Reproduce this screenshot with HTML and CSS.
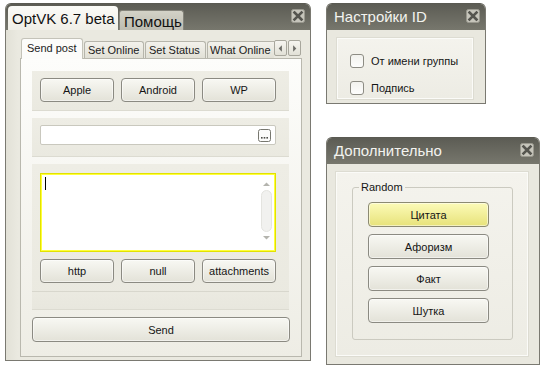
FILE: index.html
```html
<!DOCTYPE html>
<html>
<head>
<meta charset="utf-8">
<link rel="stylesheet" href="styles.css">
</head>
<body>
<div class="win main">
  <div class="titlebar">
    <div class="ttab on">OptVK 6.7 beta</div>
    <div class="ttab off">Помощь</div>
    <span class="close"><svg width="14" height="14" viewBox="0 0 14 14"><rect x="0.5" y="0.5" width="13" height="13" rx="2" fill="#c6c5bb" stroke="#9a998f"/><path d="M3.5 3.5 L10.5 10.5 M10.5 3.5 L3.5 10.5" stroke="#55554f" stroke-width="2.6" stroke-linecap="square"/></svg></span>
  </div>
  <div class="wbody">
    <div class="tabs">
      <div class="tablist">
        <div class="tab on w1">Send post</div>
        <div class="tab w2">Set Online</div>
        <div class="tab w3">Set Status</div>
        <div class="tab w4">What Online</div>
      </div>
      <div class="arrows">
        <span class="arr"><svg width="12" height="15" viewBox="0 0 12 15"><path d="M7.5 4 L4 7.5 L7.5 11 Z" fill="#6d6d68"/></svg></span>
        <span class="arr"><svg width="12" height="15" viewBox="0 0 12 15"><path d="M4.5 4 L8 7.5 L4.5 11 Z" fill="#6d6d68"/></svg></span>
      </div>
    </div>
    <div class="pane">
      <div class="group g1">
        <button class="btn">Apple</button>
        <button class="btn">Android</button>
        <button class="btn">WP</button>
      </div>
      <div class="group g2">
        <div class="input">
          <span class="dots"><svg width="13" height="13" viewBox="0 0 13 13"><rect x="0.5" y="0.5" width="12" height="12" rx="2" fill="#fbfbfa" stroke="#77776f"/><rect x="3" y="8" width="1.6" height="1.6" fill="#4d4d48"/><rect x="5.7" y="8" width="1.6" height="1.6" fill="#4d4d48"/><rect x="8.4" y="8" width="1.6" height="1.6" fill="#4d4d48"/></svg></span>
        </div>
      </div>
      <div class="group g3">
        <div class="textarea">
          <span class="caret"></span>
          <div class="vscroll">
            <svg width="15" height="8" viewBox="0 0 15 8"><path d="M4 6 L7.5 2.5 L11 6 Z" fill="#b4b4ae"/></svg>
            <span class="thumb"></span>
            <svg width="15" height="8" viewBox="0 0 15 8"><path d="M4 2 L7.5 5.5 L11 2 Z" fill="#b4b4ae"/></svg>
          </div>
        </div>
        <div class="row">
          <button class="btn">http</button>
          <button class="btn">null</button>
          <button class="btn">attachments</button>
        </div>
        <div class="sep"></div>
      </div>
      <button class="btn send">Send</button>
    </div>
  </div>
</div>

<div class="win sett">
  <div class="titlebar">
    <span class="wtitle">Настройки ID</span>
    <span class="close"><svg width="14" height="14" viewBox="0 0 14 14"><rect x="0.5" y="0.5" width="13" height="13" rx="2" fill="#c6c5bb" stroke="#9a998f"/><path d="M3.5 3.5 L10.5 10.5 M10.5 3.5 L3.5 10.5" stroke="#55554f" stroke-width="2.6" stroke-linecap="square"/></svg></span>
  </div>
  <div class="wbody2 sb">
    <div class="panel checks">
      <label class="chk"><span class="box"></span>От имени группы</label>
      <label class="chk"><span class="box"></span>Подпись</label>
    </div>
  </div>
</div>

<div class="win extra">
  <div class="titlebar">
    <span class="wtitle">Дополнительно</span>
    <span class="close"><svg width="14" height="14" viewBox="0 0 14 14"><rect x="0.5" y="0.5" width="13" height="13" rx="2" fill="#c6c5bb" stroke="#9a998f"/><path d="M3.5 3.5 L10.5 10.5 M10.5 3.5 L3.5 10.5" stroke="#55554f" stroke-width="2.6" stroke-linecap="square"/></svg></span>
  </div>
  <div class="wbody2 eb">
    <div class="panel rnd">
      <fieldset class="fs">
        <legend>Random</legend>
        <button class="btn rb yellow">Цитата</button>
        <button class="btn rb">Афоризм</button>
        <button class="btn rb">Факт</button>
        <button class="btn rb">Шутка</button>
      </fieldset>
    </div>
  </div>
</div>
</body>
</html>
```
FILE: styles.css
```css
html, body {
  margin: 0;
  padding: 0;
}
body {
  width: 542px;
  height: 368px;
  background: #ffffff;
  position: relative;
  overflow: hidden;
  font-family: "Liberation Sans", Arial, sans-serif;
  font-size: 11px;
  color: #1b1b1b;
}
.win {
  position: absolute;
  box-sizing: border-box;
  display: flex;
  flex-direction: column;
  background: #e9e8df;
  border: 1px solid #7a7971;
  border-top-color: #5a5a52;
  border-radius: 6px 6px 0 0;
}
.main { left: 5px; top: 3px; width: 306px; height: 358px; }
.sett { left: 326px; top: 3px; width: 160px; height: 101px; }
.extra { left: 326px; top: 137px; width: 214px; height: 228px; }

.titlebar {
  flex: none;
  height: 26px;
  position: relative;
  display: flex;
  align-items: flex-end;
  padding-left: 2px;
  background: linear-gradient(#5c5c54, #77776d);
  border-radius: 5px 5px 0 0;
}
.close {
  position: absolute;
  right: 5px;
  top: 5px;
  width: 14px;
  height: 14px;
  display: block;
}
.close svg { display: block; }
.ttab {
  font-size: 15px;
  color: #111;
  box-sizing: border-box;
}
.ttab.on {
  width: 110px;
  height: 24px;
  line-height: 25px;
  padding-left: 4px;
  background: linear-gradient(#fbfbf7, #f0efe7);
  border-radius: 4px 4px 0 0;
}
.ttab.off {
  width: 65px;
  height: 20px;
  line-height: 22px;
  margin-left: 1px;
  padding-left: 4px;
  background: linear-gradient(#d3d2c7, #bdbcb1);
  border: 1px solid #85847b;
  border-bottom: none;
  border-radius: 3px 3px 0 0;
}
.wtitle {
  align-self: center;
  padding-left: 5px;
  font-size: 15px;
  color: #f3f3ef;
  line-height: 26px;
}

.wbody {
  flex: 1;
  display: flex;
  flex-direction: column;
  padding: 8px 8px 3px 14px;
  background: linear-gradient(90deg, #e2e1d7, #eae9e0 12px);
}
.tabs {
  flex: none;
  height: 20px;
  display: flex;
  align-items: flex-end;
  position: relative;
  z-index: 2;
}
.tablist {
  display: flex;
  align-items: flex-end;
  width: 254px;
  overflow: hidden;
  height: 21px;
  margin-bottom: -1px;
}
.tab {
  flex: none;
  box-sizing: border-box;
  height: 17px;
  line-height: 16px;
  margin-bottom: 1px;
  padding-left: 3px;
  white-space: nowrap;
  overflow: hidden;
  color: #1b1b1b;
  background: linear-gradient(#f3f2ec, #e1e0d6);
  border: 1px solid #b6b5ab;
  border-bottom: none;
  border-radius: 3px 3px 0 0;
  margin-left: 1px;
}
.tab.on {
  height: 21px;
  line-height: 18px;
  margin-bottom: 0;
  margin-left: 1px;
  padding-left: 5px;
  background: #fcfcfa;
  border-color: #c4c3b9;
}
.w1 { width: 62px; }
.w2 { width: 60px; }
.w3 { width: 61px; }
.w4 { width: 68px; padding-left: 2px; border-right: none; border-radius: 3px 0 0 0; }
.arrows {
  display: flex;
  gap: 1px;
  margin-left: 0;
  align-self: flex-start;
  margin-top: 2px;
}
.arr {
  width: 13px;
  height: 16px;
  box-sizing: border-box;
  border: 1px solid #a8a79d;
  border-radius: 2px;
  background: linear-gradient(#f6f5f0, #e2e1d7);
  display: flex;
  align-items: center;
  justify-content: center;
}
.arr svg { display: block; }

.pane {
  flex: 1;
  box-sizing: border-box;
  display: flex;
  flex-direction: column;
  gap: 7px;
  padding: 12px 12px 14px 11px;
  border: 1px solid #b9b8ae;
  background: linear-gradient(#fdfdfb, #eeede5);
  position: relative;
  z-index: 1;
}
.group {
  flex: none;
  box-sizing: border-box;
  background: linear-gradient(#eeede5, #eae9e0);
  border-bottom: 1px solid #dcdbd1;
  padding: 0 13px 0 8px;
}
.g1 {
  height: 40px;
  display: flex;
  gap: 7px;
  padding-top: 7px;
}
.g1 .btn, .row .btn { flex: 1; height: 24px; }
.g2 { height: 39px; padding-top: 7px; }
.g3 {
  height: 146px;
  padding-top: 9px;
  display: flex;
  flex-direction: column;
}
.btn {
  box-sizing: border-box;
  margin: 0;
  padding: 0;
  font-family: "Liberation Sans", Arial, sans-serif;
  font-size: 11px;
  color: #151515;
  border: 1px solid #8b8a82;
  border-radius: 4px;
  background: linear-gradient(#f8f8f3, #e3e2d8);
  box-shadow: inset 0 0 0 1px rgba(255,255,255,0.5);
}
.input {
  height: 20px;
  box-sizing: border-box;
  background: #fff;
  border: 1px solid #c9c8be;
  border-radius: 2px;
  display: flex;
  justify-content: flex-end;
  align-items: center;
  padding-right: 4px;
}
.dots svg { display: block; }
.textarea {
  height: 79px;
  flex: none;
  box-sizing: border-box;
  background: #fff;
  border: 1px solid #e2e200;
  box-shadow: inset 0 0 0 1px #ffff3a;
  display: flex;
  justify-content: space-between;
  padding: 3px 1px 2px 4px;
}
.caret {
  width: 1px;
  height: 13px;
  background: #000;
}
.vscroll {
  width: 15px;
  display: flex;
  flex-direction: column;
  align-items: center;
  padding-top: 3px;
  gap: 2px;
}
.vscroll svg { display: block; }
.thumb {
  width: 11px;
  height: 42px;
  box-sizing: border-box;
  border: 1px solid #e4e4e0;
  border-radius: 6px;
  background: #f1f1ef;
}
.row {
  display: flex;
  gap: 7px;
  margin-top: 7px;
}
.sep {
  margin: 8px -13px 0 -8px;
  border-top: 1px solid #d8d7cd;
  flex: 1;
  background: linear-gradient(#ebeae1, #e8e7de);
}
.g3 { padding-bottom: 0; }
.send { height: 25px; width: 258px; flex: none; }

.wbody2 {
  flex: 1;
  display: flex;
  flex-direction: column;
  background: #e9e8df;
}
.sb { padding: 8px 12px 4px 10px; }
.eb { padding: 8px 11px 8px 9px; }
.panel {
  flex: 1;
  box-sizing: border-box;
  background: linear-gradient(#f4f3ed, #edece4);
  border: 1px solid #fbfbf8;
  box-shadow: 0 0 0 1px #dddcd2;
}
.checks {
  display: flex;
  flex-direction: column;
  gap: 13px;
  padding: 15px 0 0 12px;
}
.chk {
  display: flex;
  align-items: center;
  gap: 7px;
  height: 14px;
  color: #151515;
}
.box {
  width: 14px;
  height: 14px;
  box-sizing: border-box;
  border: 1px solid #8d8c84;
  border-radius: 3px;
  background: linear-gradient(#f2f2ee, #fdfdfc);
}
.rnd { padding: 8px 14px 15px 15px; display: flex; }
.fs {
  flex: 1;
  margin: 0;
  box-sizing: border-box;
  border: 1px solid #cbcac0;
  border-radius: 3px;
  padding: 9px 0 0 15px;
  display: flex;
  flex-direction: column;
  gap: 7px;
}
.fs legend {
  padding: 0 2px;
  margin-left: -9px;
  color: #151515;
  font-size: 11px;
}
.rb { width: 121px; height: 25px; }
.yellow {
  background: linear-gradient(#fcfbb8, #e7e27a);
  border-color: #8c8a72;
}
```
